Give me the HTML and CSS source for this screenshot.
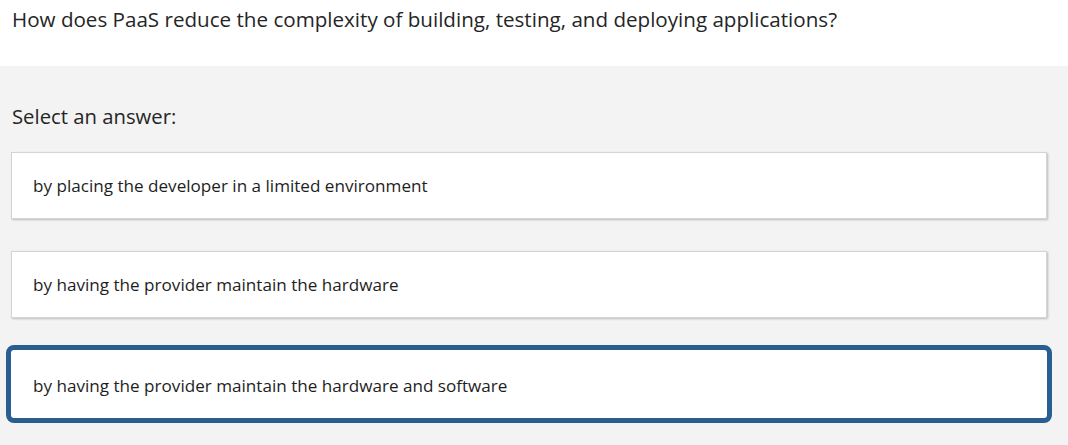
FILE: index.html
```html
<!DOCTYPE html>
<html lang="en">
<head>
<meta charset="utf-8">
<title>Question</title>
<link rel="stylesheet" href="styles.css">
</head>
<body>
<div class="question">How does PaaS reduce the complexity of building, testing, and deploying applications?</div>
<div class="answers">
  <div class="prompt">Select an answer:</div>
  <div class="options">
    <div class="option">by placing the developer in a limited environment</div>
    <div class="option">by having the provider maintain the hardware</div>
    <div class="option selected">by having the provider maintain the hardware and software</div>
  </div>
</div>
</body>
</html>
```
FILE: styles.css
```css
html, body {
  margin: 0;
  padding: 0;
  background: #f3f3f3;
}
body {
  font-family: "Open Sans", "Noto Sans", "Liberation Sans", sans-serif;
  color: #222;
  min-height: 445px;
}
.question {
  background: #fff;
  height: 66px;
  box-sizing: border-box;
  padding: 5px 0 0 12px;
  font-size: 20.6px;
  line-height: 28px;
  color: #252525;
}
.answers {
  background: #f3f3f3;
  padding: 36px 21px 20px 11px;
}
.prompt {
  font-size: 20.3px;
  line-height: 28px;
  padding-left: 1px;
  margin-bottom: 22px;
  color: #252525;
}
.options {
  display: flex;
  flex-direction: column;
  gap: 32px;
}
.option {
  height: 67px;
  box-sizing: border-box;
  background: #fff;
  border: 1px solid #d4d4d4;
  box-shadow: 1px 1px 2px rgba(0, 0, 0, 0.22);
  display: flex;
  align-items: center;
  padding-left: 21px;
  font-size: 17.1px;
  color: #1e1e1e;
}
.option.selected {
  height: 78px;
  margin: -5px -5px 0 -5px;
  border: 5px solid #2a5e91;
  border-radius: 8px;
  padding: 2px 0 0 22px;
  box-shadow: none;
}
```
